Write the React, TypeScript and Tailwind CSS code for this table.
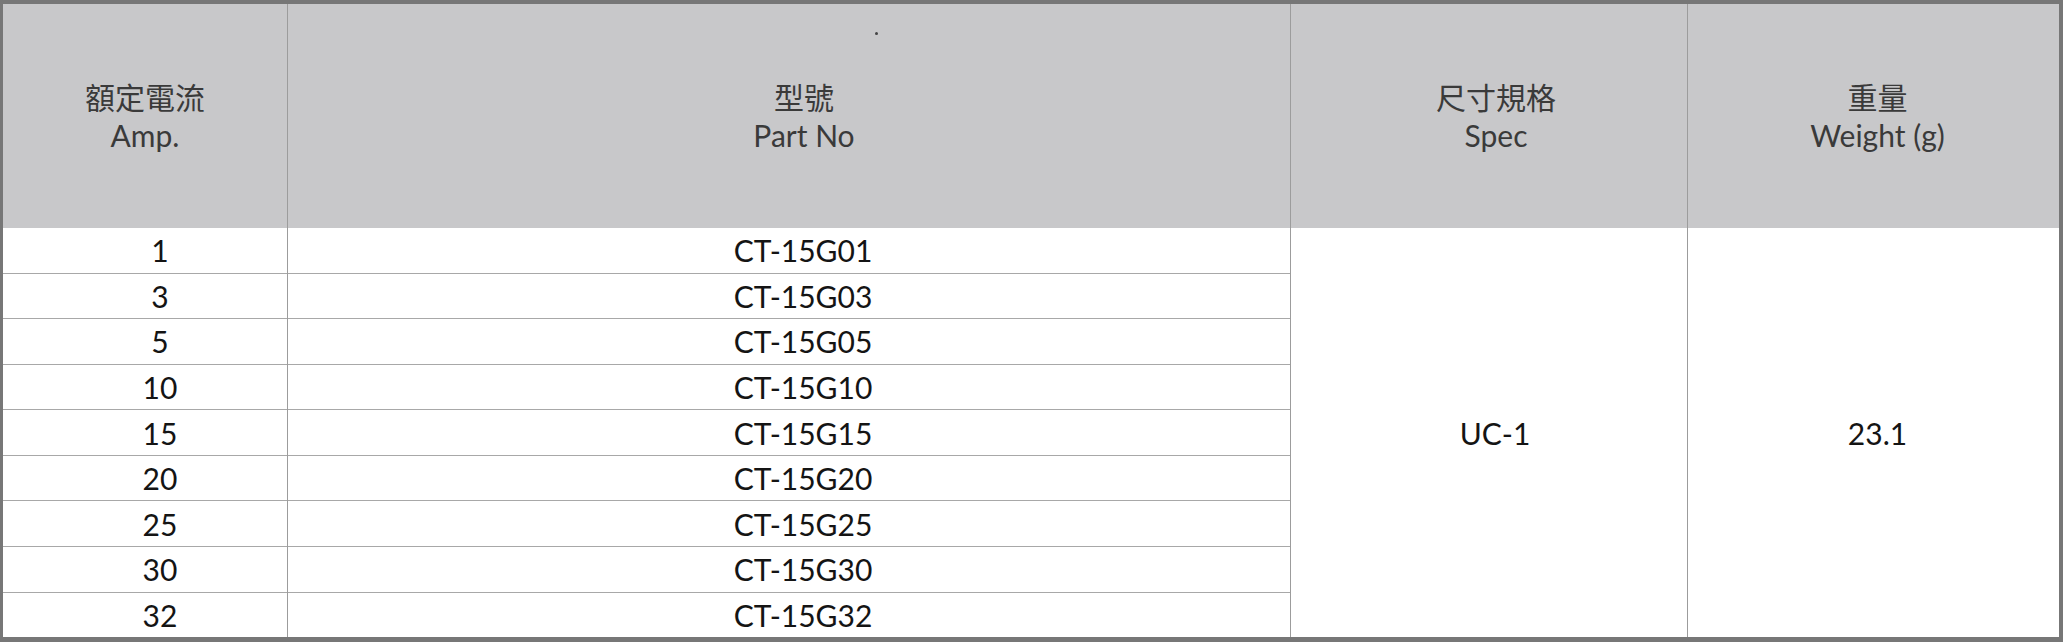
import React from "react";

const amps = ["1", "3", "5", "10", "15", "20", "25", "30", "32"];
const parts = ["CT-15G01", "CT-15G03", "CT-15G05", "CT-15G10", "CT-15G15", "CT-15G20", "CT-15G25", "CT-15G30", "CT-15G32"];

const font = { fontFamily: 'Lato, "Noto Sans CJK TC", sans-serif' };

function HeaderCell({ zh, en, extra, border = true }: { zh: string; en: string; extra: string; border?: boolean }) {
  return (
    <div className={`relative flex flex-col items-center justify-center ${extra} ${border ? "border-r border-[#9c9c9c]" : ""}`}>
      <div className="flex flex-col items-center mt-[0px] text-[30px] leading-[38px] text-[#3a3a3a]">
        <span>{zh}</span>
        <span>{en}</span>
      </div>
    </div>
  );
}

export default function App() {
  return (
    <div
      className="w-[2063px] h-[642px] bg-white border-[#777777] border-t-4 border-l-[3px] border-r-4 border-b-[5px] flex flex-col"
      style={font}
    >
      <div className="h-[224px] shrink-0 bg-[#c8c8ca] grid grid-cols-[285px_1003px_397px_1fr]">
        <HeaderCell zh="額定電流" en="Amp." extra="" />
        <div className="relative flex flex-col items-center justify-center pl-[30px] border-r border-[#9c9c9c]">
          <span className="absolute left-[587px] top-[28px] w-[3px] h-[3px] rounded-full bg-[#444]" />
          <div className="flex flex-col items-center mt-[0px] text-[30px] leading-[38px] text-[#3a3a3a]">
            <span>型號</span>
            <span>Part No</span>
          </div>
        </div>
        <HeaderCell zh="尺寸規格" en="Spec" extra="pl-[14px]" />
        <HeaderCell zh="重量" en="Weight (g)" extra="pl-[8px]" border={false} />
      </div>
      <div className="flex-1 min-h-0 grid grid-cols-[285px_1003px_397px_1fr] text-[30px] leading-[30px] text-[#141414]">
        <div className="flex flex-col min-h-0 border-r border-[#9c9c9c]">
          {amps.map((a, i) => (
            <div
              key={a}
              className={`flex-1 basis-0 min-h-0 flex items-center justify-center pl-[30px] ${i > 0 ? "border-t border-[#a8a8a8]" : ""}`}
            >
              {a}
            </div>
          ))}
        </div>
        <div className="flex flex-col min-h-0 border-r border-[#9c9c9c]">
          {parts.map((p, i) => (
            <div
              key={p}
              className={`flex-1 basis-0 min-h-0 flex items-center justify-center pl-[28px] ${i > 0 ? "border-t border-[#a8a8a8]" : ""}`}
            >
              {p}
            </div>
          ))}
        </div>
        <div className="flex items-center justify-center pl-[12px] border-r border-[#9c9c9c]">UC-1</div>
        <div className="flex items-center justify-center pl-[8px]">23.1</div>
      </div>
    </div>
  );
}
